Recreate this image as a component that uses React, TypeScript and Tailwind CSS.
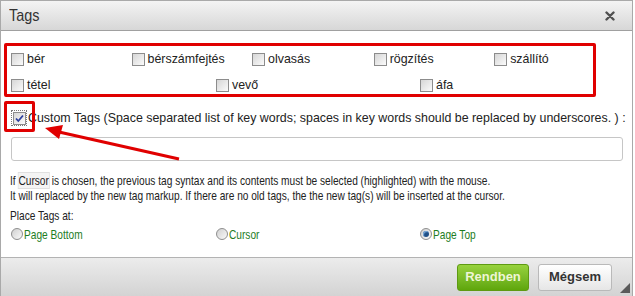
// the old dialog uses a condensed face for its help text; squeeze Liberation Sans to match
const cond = "inline-block origin-left scale-x-[0.78] whitespace-nowrap";

function Box({ checked = false }: { checked?: boolean }) {
	return (
		<span className="relative inline-block h-[13px] w-[13px] shrink-0 border border-[#8c8c8c] bg-gradient-to-br from-[#d6d6d6] to-[#fbfbfb]">
			{checked && (
				<svg viewBox="0 0 11 11" className="absolute left-0 top-0 h-[11px] w-[11px]">
					<path d="M2 5.5 L4.3 8 L9 2.5" fill="none" stroke="#2b3f9e" strokeWidth="1.8" />
				</svg>
			)}
		</span>
	);
}

function Radio({ checked = false }: { checked?: boolean }) {
	return (
		<span className="relative inline-flex h-[12px] w-[12px] shrink-0 items-center justify-center rounded-full border border-[#8e8e8e] bg-gradient-to-br from-[#d0d0d0] to-[#fafafa]">
			{checked && <span className="h-[6px] w-[6px] rounded-full bg-[#1f4f86] shadow-[inset_1px_1px_1px_#7fb0e0]" />}
		</span>
	);
}

function Item({ label, w }: { label: string; w: string }) {
	return (
		<label className={`flex items-center gap-[3px] ${w}`}>
			<Box />
			<span>{label}</span>
		</label>
	);
}

function Choice({ label, checked = false, w }: { label: string; checked?: boolean; w: string }) {
	return (
		<label className={`flex items-center gap-[1px] ${w}`}>
			<Radio checked={checked} />
			<span className={cond}>{label}</span>
		</label>
	);
}

export default function App() {
	return (
		<div className="relative h-[296px] w-[635px] overflow-hidden bg-white font-[family-name:'Liberation_Sans',Arial,sans-serif] text-[12.4px] text-[#222]">
			<div className="flex h-[296px] w-[633px] flex-col border-x border-t border-[#a9a9a9]">
				{/* Title bar */}
				<div className="flex h-[30px] shrink-0 items-center justify-between border-b border-[#a0a0a0] bg-gradient-to-b from-[#f4f4f4] to-[#d7d7d7] pl-[8px] pr-[17px]">
					<span className="inline-block origin-left scale-x-[0.85] text-[17px] text-[#333]">Tags</span>
					<svg viewBox="0 0 10 10" className="h-[10px] w-[10px]">
						<path d="M1.5 1.5 L8.5 8.5 M8.5 1.5 L1.5 8.5" stroke="#505050" strokeWidth="2.4" strokeLinecap="round" />
					</svg>
				</div>

				{/* Body */}
				<div className="relative h-[226px] shrink-0 overflow-hidden">
					<div className="ml-[3px] mt-[12px] h-[54px] w-[592px] rounded-[2px] border-[3px] border-[#e00000] pl-[4px] pt-[5px]">
						<div className="flex h-[16px]">
							<Item label="bér" w="w-[122px]" />
							<Item label="bérszámfejtés" w="w-[122px]" />
							<Item label="olvasás" w="w-[123px]" />
							<Item label="rögzítés" w="w-[122px]" />
							<Item label="szállító" w="w-[100px]" />
						</div>
						<div className="mt-[10px] flex h-[16px]">
							<Item label="tétel" w="w-[205px]" />
							<Item label="vevő" w="w-[204px]" />
							<Item label="áfa" w="w-[100px]" />
						</div>
					</div>

					<div className="ml-[10px] mt-[13px] flex h-[16px] items-center gap-[1px] whitespace-nowrap">
						<span className="flex h-[16px] w-[16px] items-center justify-center outline-1 outline-dotted outline-[#777] -outline-offset-1">
							<Box checked />
						</span>
						<span>Custom Tags (Space separated list of key words; spaces in key words should be replaced by underscores. ) :</span>
					</div>

					<div className="ml-[10px] mt-[11px] h-[24px] w-[612px] rounded-[3px] border border-[#c6c6c6] bg-white" />

					<div className="ml-[9px] mt-[12px] text-[13px] leading-[15px] text-[#222]">
						<p className={cond}>
							If <span className="bg-[#f4f4f4] outline outline-1 outline-[#e0e0e0]">Cursor</span> is chosen, the previous tag syntax and its contents must be selected (highlighted) with the mouse.
						</p>
						<p className={cond}>It will replaced by the new tag markup. If there are no old tags, the the new tag(s) will be inserted at the cursor.</p>
						<p className={`${cond} mt-[5px] block`}>Place Tags at:</p>
						<div className="ml-[1px] mt-[3px] flex h-[16px] items-center text-[#1e7d1e]">
							<Choice label="Page Bottom" w="w-[205px]" />
							<Choice label="Cursor" w="w-[204px]" />
							<Choice label="Page Top" checked w="w-[120px]" />
						</div>
					</div>

					{/* annotation overlays */}
					<div className="absolute left-[3px] top-[70px] z-10 h-[31px] w-[31px] rounded-[2px] border-[3px] border-[#e00000]" />
					<svg className="absolute left-0 top-0 z-10 h-[140px] w-[200px]" viewBox="0 0 200 140">
						<line x1="178" y1="128" x2="58" y2="101" stroke="#e00000" strokeWidth="3" />
						<polygon points="44,97 62,94 58,108" fill="#e00000" />
					</svg>
				</div>

				{/* Footer */}
				<div className="relative flex h-[39px] shrink-0 items-center justify-end gap-[9px] border-t border-[#b3b3b3] bg-gradient-to-b from-[#ececec] to-[#d3d3d3] pr-[20px]">
					<button className="h-[27px] w-[72px] rounded-[3px] border border-[#5e9a12] bg-gradient-to-b from-[#97d23c] to-[#5fa60a] text-[13px] font-bold text-[#eef5d6]">
						Rendben
					</button>
					<button className="h-[27px] w-[74px] rounded-[3px] border border-[#b9b9b9] bg-gradient-to-b from-[#ffffff] to-[#e6e6e6] text-[13px] font-bold text-[#333]">
						Mégsem
					</button>
					<svg viewBox="0 0 10 10" className="absolute bottom-[3px] right-[2px] h-[10px] w-[10px]">
						<polygon points="10,0 10,10 0,10" fill="#5a5a5a" />
					</svg>
				</div>
			</div>
		</div>
	);
}
